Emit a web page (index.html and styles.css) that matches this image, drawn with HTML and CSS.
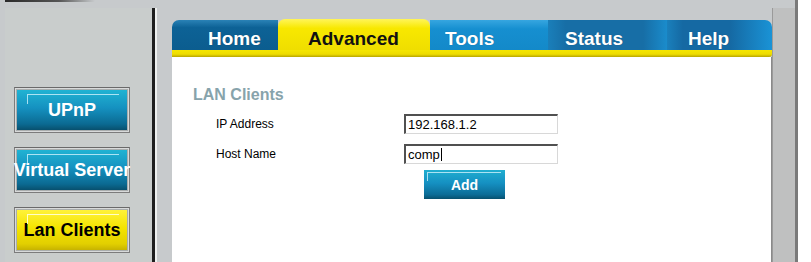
FILE: index.html
```html
<!DOCTYPE html>
<html lang="en">
<head>
    <meta charset="UTF-8">
    <meta name="viewport" content="width=device-width, initial-scale=1.0">
    <title>LAN Clients</title>
    <link rel="stylesheet" href="styles.css">
</head>
<body>
    <div class="page">
        <div class="frame">
            <div class="topstrip"><div class="topline"></div></div>

            <div class="row">
                <!-- Side menu -->
                <div class="sidebar">
                    <div class="navframe"><a class="navbtn">UPnP</a></div>
                    <div class="navframe"><a class="navbtn">Virtual Server</a></div>
                    <div class="navframe"><a class="navbtn active">Lan Clients</a></div>
                </div>

                <!-- Main panel -->
                <div class="main">
                    <div class="tabs">
                        <a class="tab tab-home">Home</a>
                        <a class="tab tab-adv">Advanced</a>
                        <a class="tab tab-tools">Tools</a>
                        <a class="tab tab-status">Status</a>
                        <a class="tab tab-help">Help</a>
                    </div>
                    <div class="tabline"></div>

                    <div class="content">
                        <h2>LAN Clients</h2>
                        <div class="form">
                            <label>IP Address</label>
                            <input type="text" value="192.168.1.2">
                            <label>Host Name</label>
                            <div class="field">
                                <input type="text" value="comp">
                                <span class="caret"></span>
                            </div>
                            <button class="addbtn">Add</button>
                        </div>
                    </div>
                </div>

                <div class="rail"></div>
            </div>
        </div>
        <div class="edge"></div>
    </div>
</body>
</html>
```

FILE: styles.css
```css
html, body { margin: 0; height: 100%; }
body { font-family: "Liberation Sans", Arial, sans-serif; background: #fff; overflow: hidden; }

.page { display: flex; height: 262px; }
.frame { width: 795px; background: #c7cacc; display: flex; flex-direction: column; }
.edge { width: 3px; background: #7a7a7a; }

.topstrip { height: 8px; }
.topline { margin-left: 5px; width: 90px; height: 2px; background: linear-gradient(to right, #2a2a2a, #555 60%, rgba(90,90,90,0)); }

.row { display: flex; flex: 1; }

/* side menu */
.sidebar { width: 138px; margin-left: 5px; padding: 79px 0 0 9px; background: #c9cdcc; border-right: 3px solid #1e1e1e; box-shadow: 2px 0 0 #eef0ef; display: flex; flex-direction: column; gap: 14px; }
.navframe { width: 112px; height: 42px; padding: 1px; border: 1px solid #7c7c7c; border-top-color: #6a6a6a; background: #a9adad; box-shadow: inset 0 0 0 1px #d8dada; }
.navbtn { position: relative; display: flex; align-items: center; justify-content: center; height: 40px; width: 110px; margin: 1px; background: linear-gradient(#20b3d3, #1591c0 45%, #0b6a92 85%, #08506e); color: #fff; font-weight: bold; font-size: 18px; white-space: nowrap; }
.navbtn::before { content: ""; position: absolute; left: 10px; top: 4px; right: 8px; height: 9px; border-top: 1px solid rgba(220,245,255,.75); border-left: 1px solid rgba(220,245,255,.75); }
.navbtn.active { background: linear-gradient(#fff23a, #f4e400 45%, #e2cf00 85%, #c7b300); color: #000; }
.navbtn.active::before { border-color: rgba(255,255,220,.9); }

/* main panel */
.main { width: 600px; margin-left: 17px; padding-top: 11px; display: flex; flex-direction: column; }
.tabs { display: flex; height: 31px; align-items: flex-end; }
.tab { height: 30px; box-sizing: border-box; padding-top: 9px; color: #fff; font-weight: bold; font-size: 19px; line-height: 20px; text-shadow: 0 0 1px rgba(0,0,0,.3); }
.tab-home { width: 106px; padding-left: 36px; border-radius: 7px 0 0 0; background: linear-gradient(#2a82b6, #0d6296 25%, #0b5d8f); }
.tab-adv { width: 152px; height: 31px; padding-top: 10px; padding-left: 30px; border-radius: 7px 7px 0 0; background: linear-gradient(#fff55a, #f8e800 30%, #efde00); color: #111; text-shadow: none; }
.tab-tools { width: 118px; padding-left: 15px; background: linear-gradient(#36a6e0, #168fd0 30%, #1389c9); }
.tab-status { width: 119px; padding-left: 17px; background: linear-gradient(to right, #1a7fba, #176ea6 15%, #176ea6 80%, #1a8ccc); }
.tab-help { width: 105px; padding-left: 21px; border-radius: 0 7px 0 0; background: linear-gradient(to right, #1a80bc, #1569a3 15%, #1569a3 60%, #1a93d6); }
.tabline { height: 7px; box-sizing: border-box; background: linear-gradient(#f5e700, #eedc00 60%, #b8a600); border-radius: 0 0 3px 0; }

.content { flex: 1; background: #fff; padding: 29px 0 0 21px; border-right: 4px solid #8a8a8a; margin-right: -3px; }
.content h2 { margin: 0; font-size: 16px; line-height: 18px; color: #87a3ab; }

.form { display: grid; grid-template-columns: 188px 154px; row-gap: 10px; margin: 10px 0 0 23px; align-items: center; }
.form label { font-size: 12px; color: #000; }
.form input { box-sizing: border-box; width: 154px; height: 20px; margin: 0; padding: 1px 2px; border: 2px solid; border-color: #505050 #d8d8d8 #d8d8d8 #505050; border-width: 2px 1px 1px 2px; font: 13px "Liberation Sans", Arial, sans-serif; color: #000; background: #fff; outline: none; }
.field { position: relative; }
.caret { position: absolute; left: 37px; top: 4px; width: 1px; height: 13px; background: #000; }

.addbtn { grid-column: 2; position: relative; width: 81px; height: 29px; margin: -4px 0 0 20px; border: none; padding: 0; background: linear-gradient(#20aed0, #1590c2 45%, #0c6c96 85%, #07506e); color: #fff; font: bold 14px "Liberation Sans", Arial, sans-serif; }
.addbtn::before { content: ""; position: absolute; left: 3px; top: 2px; right: 4px; height: 8px; border-top: 1px solid rgba(220,245,255,.75); border-left: 1px solid rgba(220,245,255,.75); }

.rail { flex: 1; background: #bfc0c0; box-shadow: inset 1px 0 0 #9a9a9a; }
```
